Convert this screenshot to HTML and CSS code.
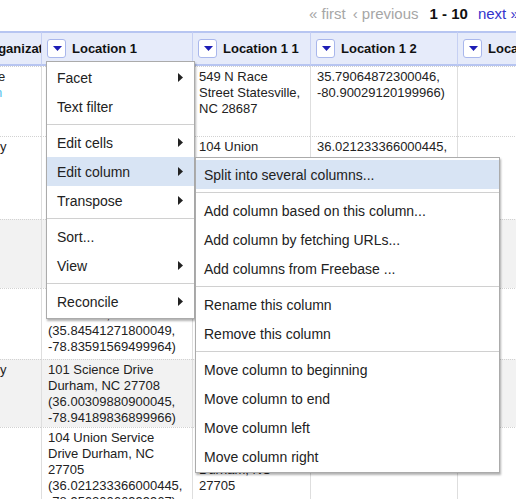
FILE: index.html
```html
<!DOCTYPE html>
<html>
<head>
<meta charset="utf-8">
<title>Refine grid</title>
<link rel="stylesheet" href="styles.css">
</head>
<body>
<div class="pager">
  <span class="pg-dim">« first</span>
  <span class="pg-dim pg-prev">‹ previous</span>
  <span class="pg-range">1 - 10</span>
  <span class="pg-link">next »</span>
</div>
<table class="grid">
  <colgroup>
    <col class="w0"><col class="w1"><col class="w2"><col class="w3"><col class="w4">
  </colgroup>
  <thead>
    <tr class="hrow">
      <th class="c0">Organization</th>
      <th><div class="hd"><span class="dd"><svg width="9" height="5" viewBox="0 0 9 5"><path d="M0 0H9L4.5 5Z" fill="#1d1db5"/></svg></span><span>Location 1</span></div></th>
      <th><div class="hd"><span class="dd"><svg width="9" height="5" viewBox="0 0 9 5"><path d="M0 0H9L4.5 5Z" fill="#1d1db5"/></svg></span><span>Location 1 1</span></div></th>
      <th><div class="hd"><span class="dd"><svg width="9" height="5" viewBox="0 0 9 5"><path d="M0 0H9L4.5 5Z" fill="#1d1db5"/></svg></span><span>Location 1 2</span></div></th>
      <th><div class="hd"><span class="dd"><svg width="9" height="5" viewBox="0 0 9 5"><path d="M0 0H9L4.5 5Z" fill="#1d1db5"/></svg></span><span>Location 1 3</span></div></th>
    </tr>
  </thead>
  <tbody>
    <tr class="r1">
      <td class="c0"><div class="cut">e</div><div class="cut lnk">n</div></td>
      <td>549 N Race Street Statesville, NC 28687 (35.79064872300046, -80.90029120199966)</td>
      <td>549 N Race Street Statesville, NC 28687</td>
      <td>35.79064872300046, -80.90029120199966)</td>
      <td></td>
    </tr>
    <tr class="r2">
      <td class="c0">y</td>
      <td>104 Union Service Drive Durham, NC 27705 (36.021233366000445, -78.95620066999967)</td>
      <td>104 Union Service Drive Durham, NC 27705</td>
      <td>36.021233366000445, -78.95620066999967)</td>
      <td></td>
    </tr>
    <tr class="r3 alt">
      <td class="c0"></td>
      <td>300 W Morgan St Raleigh, NC 27601 (35.77632919700048, -78.64364236199966)</td>
      <td>300 W Morgan St Raleigh, NC 27601</td>
      <td>35.77632919700048, -78.64364236199966)</td>
      <td></td>
    </tr>
    <tr class="r4">
      <td class="c0"></td>
      <td>1000 Perimeter Park Morrisville, NC 27560 (35.84541271800049, -78.83591569499964)</td>
      <td>1000 Perimeter Park Morrisville, NC 27560</td>
      <td>35.84541271800049, -78.83591569499964)</td>
      <td></td>
    </tr>
    <tr class="r5 alt">
      <td class="c0">y</td>
      <td>101 Science Drive Durham, NC 27708 (36.00309880900045, -78.94189836899966)</td>
      <td>101 Science Drive Durham, NC 27708</td>
      <td>36.00309880900045, -78.94189836899966)</td>
      <td></td>
    </tr>
    <tr class="r6">
      <td class="c0"></td>
      <td>104 Union Service Drive Durham, NC 27705 (36.021233366000445, -78.95620066999967)</td>
      <td>104 Union Service Drive Durham, NC 27705</td>
      <td>36.021233366000445, -78.95620066999967)</td>
      <td></td>
    </tr>
  </tbody>
</table>

<div class="menu menu-main">
  <div class="mi"><span>Facet</span><svg width="5" height="9" viewBox="0 0 5 9"><path d="M0 0L5 4.5L0 9Z" fill="#222"/></svg></div>
  <div class="mi"><span>Text filter</span></div>
  <div class="sep"></div>
  <div class="mi"><span>Edit cells</span><svg width="5" height="9" viewBox="0 0 5 9"><path d="M0 0L5 4.5L0 9Z" fill="#222"/></svg></div>
  <div class="mi on"><span>Edit column</span><svg width="5" height="9" viewBox="0 0 5 9"><path d="M0 0L5 4.5L0 9Z" fill="#222"/></svg></div>
  <div class="mi"><span>Transpose</span><svg width="5" height="9" viewBox="0 0 5 9"><path d="M0 0L5 4.5L0 9Z" fill="#222"/></svg></div>
  <div class="sep"></div>
  <div class="mi"><span>Sort...</span></div>
  <div class="mi"><span>View</span><svg width="5" height="9" viewBox="0 0 5 9"><path d="M0 0L5 4.5L0 9Z" fill="#222"/></svg></div>
  <div class="sep"></div>
  <div class="mi"><span>Reconcile</span><svg width="5" height="9" viewBox="0 0 5 9"><path d="M0 0L5 4.5L0 9Z" fill="#222"/></svg></div>
</div>

<div class="menu menu-sub">
  <div class="mi on"><span>Split into several columns...</span></div>
  <div class="sep"></div>
  <div class="mi"><span>Add column based on this column...</span></div>
  <div class="mi"><span>Add column by fetching URLs...</span></div>
  <div class="mi"><span>Add columns from Freebase ...</span></div>
  <div class="sep"></div>
  <div class="mi"><span>Rename this column</span></div>
  <div class="mi"><span>Remove this column</span></div>
  <div class="sep"></div>
  <div class="mi"><span>Move column to beginning</span></div>
  <div class="mi"><span>Move column to end</span></div>
  <div class="mi"><span>Move column left</span></div>
  <div class="mi"><span>Move column right</span></div>
</div>
</body>
</html>
```

FILE: styles.css
```css
* { box-sizing: border-box; }

html, body {
  margin: 0;
  padding: 0;
}

body {
  position: relative;
  width: 516px;
  height: 499px;
  overflow: hidden;
  background: #fff;
  color: #222;
  font-family: "Liberation Sans", Arial, sans-serif;
}

/* pager */
.pager {
  display: flex;
  height: 31px;
  padding: 5px 0 0 309px;
  font-size: 15px;
  line-height: 17px;
  white-space: nowrap;
}
.pg-dim { color: #a6a6a6; margin-right: 7px; }
.pg-prev { margin-right: 11px; }
.pg-range { font-weight: bold; color: #111; margin-right: 10px; }
.pg-link { color: #3434cc; }

/* grid */
.grid {
  border-collapse: separate;
  border-spacing: 0;
  table-layout: fixed;
  width: 577px;
  font-size: 13px;
  line-height: 16px;
}
.w0 { width: 41px; }
.w1 { width: 151px; }
.w2 { width: 118px; }
.w3 { width: 147px; }
.w4 { width: 120px; }

.hrow { height: 35px; }
.grid th {
  padding: 0 5px;
  background: #e6ebfa;
  border-top: 2px solid #b7c5f1;
  border-bottom: 2px solid #b7c5f1;
  border-left: 1px solid #c6d0f3;
  text-align: left;
  font-weight: bold;
  color: #111;
  white-space: nowrap;
  overflow: hidden;
}
.grid th.c0 {
  border-left: 0;
  padding: 0;
  text-indent: -17px;
}
.hd {
  display: flex;
  align-items: center;
  gap: 6px;
}
.dd {
  flex: none;
  display: flex;
  align-items: center;
  justify-content: center;
  width: 19px;
  height: 19px;
  background: #fff;
  border: 1px solid #a9b7ec;
  border-radius: 3px;
}
.dd svg { margin-left: 1px; }

.grid td {
  vertical-align: top;
  padding: 2px 6px 0;
  border-top: 1px dotted #d2d2d2;
  border-left: 1px solid #dedede;
  overflow: hidden;
}
.grid td.c0 {
  border-left: 0;
  padding: 2px 0 0;
  white-space: nowrap;
}
.cut { text-indent: -2px; }
.lnk { color: #55c2ee; text-indent: -5px; }
.alt td { background: #f2f2f2; }

.r1 { height: 70px; }
.r2 { height: 83px; }
.r3 { height: 69px; }
.r4 { height: 71px; }
.r5 { height: 68px; }
.r6 { height: 110px; }

/* menus (overlays) */
.menu {
  position: absolute;
  background: #fff;
  border: 1px solid #ababab;
  box-shadow: 1px 2px 2px rgba(0, 0, 0, 0.3);
  font-size: 14px;
  color: #222;
}
.menu-main {
  left: 46px;
  top: 61px;
  width: 149px;
  padding: 1px 0 2px;
}
.menu-sub {
  left: 195px;
  top: 157px;
  width: 305px;
  padding: 2px 0 1px;
}
.mi {
  display: flex;
  align-items: center;
  justify-content: space-between;
  height: 29px;
  padding: 0 11px 0 10px;
  white-space: nowrap;
}
.menu-sub .mi { padding-left: 8px; }
.mi.on { background: #d8e4f4; }
.sep {
  height: 7px;
  padding-top: 3px;
}
.sep::after {
  content: "";
  display: block;
  border-top: 1px solid #d0d0d0;
}
```
